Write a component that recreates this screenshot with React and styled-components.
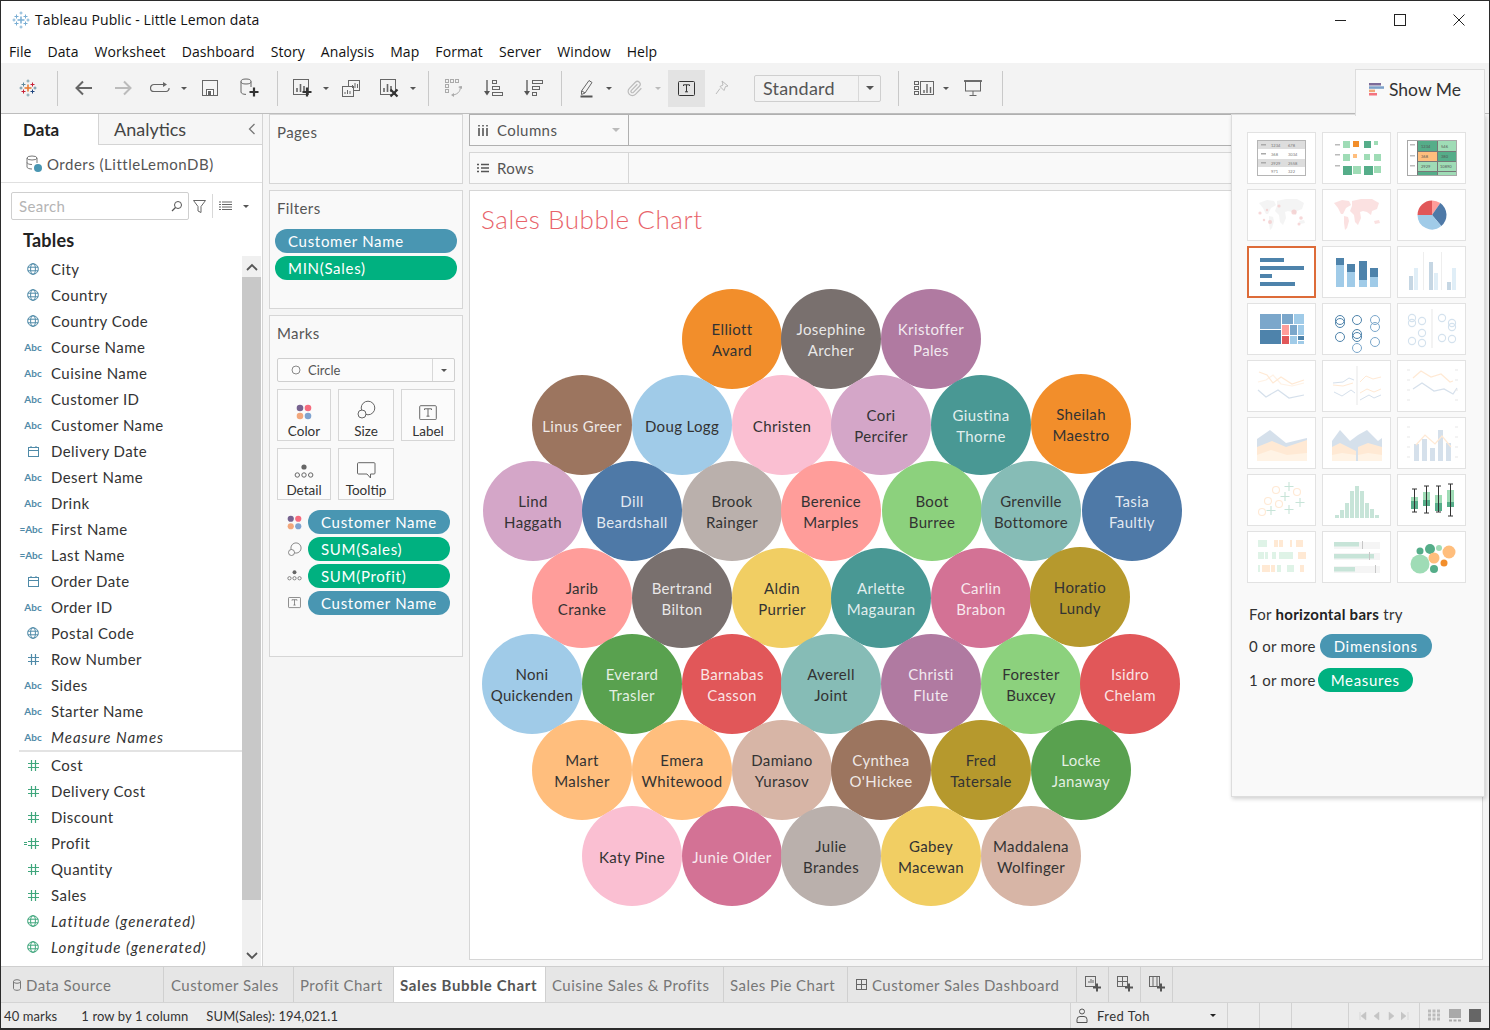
import React from "react";
import styled, { createGlobalStyle } from "styled-components";

const UI = `"Open Sans", "Noto Sans", sans-serif`;
const BOOK = `Lato, "Open Sans", sans-serif`;

const Global = createGlobalStyle`
	html, body { margin: 0; padding: 0; overflow: hidden; background: #fff; }
	* { box-sizing: border-box; }
	svg { display: block; }
`;

const Windowed = styled.div`
	width: 1490px;
	height: 1030px;
	display: flex;
	flex-direction: column;
	border: 1px solid #2b2b2b;
	border-bottom-width: 2px;
	background: #f5f5f5;
	font-family: ${BOOK};
	color: #333;
	overflow: hidden;
	position: relative;
`;

/* title + menu */
const TitleBar = styled.div`
	height: 37px;
	background: #fff;
	display: flex;
	align-items: center;
	padding: 0 1px 0 11px;
	font: 14px ${UI};
	letter-spacing: 0.12px;
	color: #111;
	gap: 5px;
`;
const WinButtons = styled.div`
	margin-left: auto;
	display: flex;
`;
const WinButton = styled.div`
	width: 59px;
	height: 37px;
	display: flex;
	align-items: center;
	justify-content: center;
`;
const MenuBar = styled.div`
	height: 25px;
	background: #fff;
	display: flex;
	align-items: center;
	padding: 2px 0 0 8px;
	gap: 16px;
	font: 14px ${UI};
	letter-spacing: 0.08px;
	color: #111;
`;

/* toolbar */
const ToolBar = styled.div`
	height: 51px;
	background: #f3f3f3;
	border-bottom: 1px solid #bdbdbd;
	display: flex;
	align-items: center;
`;
const ToolSep = styled.div`
	width: 1px;
	height: 35px;
	background: #c9c9c9;
	margin-left: ${(p) => p.$ml}px;
`;
const ToolIcon = styled.div`
	width: ${(p) => p.$w || 24}px;
	height: ${(p) => (p.$active ? 37 : 24)}px;
	margin-left: ${(p) => p.$ml}px;
	display: flex;
	align-items: center;
	justify-content: center;
	background: ${(p) => (p.$active ? "#e3e3e3" : "transparent")};
`;
const Caret = styled.div`
	width: 0;
	height: 0;
	flex: none;
	border-left: ${(p) => p.$s || 3}px solid transparent;
	border-right: ${(p) => p.$s || 3}px solid transparent;
	border-top: ${(p) => p.$s || 3}px solid ${(p) => p.$color || "#555"};
	margin-left: ${(p) => (p.$ml || 0) + 4 - (p.$s || 3)}px;
	margin-right: ${(p) => 4 - (p.$s || 3)}px;
`;
const FitSelect = styled.div`
	width: 127px;
	height: 27px;
	margin-left: ${(p) => p.$ml}px;
	border: 1px solid #cfcfcf;
	border-radius: 2px;
	display: flex;
	align-items: center;
	font-size: 18px;
	letter-spacing: 0.2px;
	color: #555;
	padding-left: 8px;
`;
const FitArrow = styled.div`
	margin-left: auto;
	width: 22px;
	height: 100%;
	border-left: 1px solid #d8d8d8;
	display: flex;
	align-items: center;
	justify-content: center;
`;

/* main layout */
const Main = styled.div`
	flex: 1;
	min-height: 0;
	display: flex;
`;
const DataPane = styled.div`
	width: 262px;
	background: #fff;
	border-right: 1px solid #d4d4d4;
	display: flex;
	flex-direction: column;
`;
const PaneTabs = styled.div`
	display: flex;
	height: 31px;
`;
const PaneTab = styled.div`
	width: ${(p) => p.$w}px;
	display: flex;
	align-items: center;
	font-size: ${(p) => (p.$active ? 17 : 18)}px;
	font-weight: ${(p) => (p.$active ? 700 : 400)};
	color: ${(p) => (p.$active ? "#222" : "#444")};
	padding-left: ${(p) => (p.$active ? 22 : 15)}px;
	background: ${(p) => (p.$active ? "#fff" : "#f6f6f6")};
	border-left: ${(p) => (p.$active ? "0" : "1px solid #d4d4d4")};
	border-bottom: ${(p) => (p.$active ? "0" : "1px solid #d4d4d4")};
	justify-content: space-between;
	padding-right: 6px;
`;
const SourceRow = styled.div`
	height: 38px;
	display: flex;
	align-items: center;
	gap: 4px;
	padding: 0 0 0 24px;
	border-bottom: 1px solid #e0e0e0;
	font-size: 15px;
	letter-spacing: 0.5px;
	color: #555;
`;
const SearchRow = styled.div`
	height: 38px;
	padding: 9px 0 0 10px;
	display: flex;
	align-items: flex-start;
`;
const SearchBox = styled.div`
	width: 178px;
	height: 28px;
	border: 1px solid #cfcfcf;
	border-radius: 2px;
	display: flex;
	align-items: center;
	justify-content: space-between;
	padding: 0 5px 0 7px;
	font-size: 15px;
	letter-spacing: 0.35px;
	color: #b4b4b4;
`;
const SearchTool = styled.div`
	display: flex;
	align-items: center;
	height: 28px;
	gap: 6px;
	margin-left: 4px;
`;
const ThinSep = styled.div`
	width: 1px;
	height: 24px;
	background: #d8d8d8;
`;
const TablesTitle = styled.div`
	height: 35px;
	padding: 8px 0 0 22px;
	font-size: 18px;
	font-weight: 700;
	letter-spacing: 0.2px;
	color: #222;
`;
const FieldArea = styled.div`
	flex: 1;
	min-height: 0;
	display: flex;
`;
const FieldList = styled.div`
	flex: 1;
	min-width: 0;
`;
const FieldRow = styled.div`
	height: 26px;
	display: flex;
	align-items: center;
	font-size: 15px;
	color: #333;
	font-style: ${(p) => (p.$italic ? "italic" : "normal")};
	letter-spacing: ${(p) => (p.$italic ? 1 : 0.45)}px;
`;
const FieldGlyph = styled.div`
	width: 50px;
	padding-left: 19px;
	height: 100%;
	display: flex;
	align-items: center;
	justify-content: center;
	flex: none;
	padding-right: 5px;
	font-style: normal;
	letter-spacing: 0;
`;
const AbcMark = styled.span`
	font-size: 10px;
	font-weight: 700;
	color: #4f8aa8;
	white-space: nowrap;
	margin-left: ${(p) => (p.$eq ? -4 : 0)}px;
`;
const EqShift = styled.div`
	margin-left: -4px;
`;
const FieldDivider = styled.div`
	height: 2px;
	margin-left: 18px;
	background: #e3e3e3;
`;
const ScrollTrack = styled.div`
	width: 19px;
	margin-right: 1px;
	background: #f0f0f0;
	display: flex;
	flex-direction: column;
`;
const ScrollArrow = styled.div`
	height: 21px;
	display: flex;
	align-items: center;
	justify-content: center;
	margin-top: ${(p) => (p.$end ? "auto" : "0")};
`;
const ScrollThumb = styled.div`
	height: 623px;
	background: #c8c8c8;
`;
const MidColumn = styled.div`
	width: 206px;
	padding: 0 6px;
	display: flex;
	flex-direction: column;
	gap: 6px;
	flex: none;
`;
const Card = styled.div`
	height: ${(p) => p.$h}px;
	background: #f9f9f9;
	border: 1px solid #d6d6d6;
	padding: 0 5px;
`;
const CardTitle = styled.div`
	font-size: 15px;
	letter-spacing: 0.4px;
	color: #555;
	padding: 8px 0 0 2px;
	height: 38px;
`;
const Pill = styled.div`
	height: 24px;
	border-radius: 12px;
	background: ${(p) => (p.$measure ? "#00b180" : "#4996b2")};
	color: #fff;
	font-size: 15px;
	letter-spacing: 0.7px;
	display: flex;
	align-items: center;
	padding: 0 ${(p) => p.$pad || 13}px;
	white-space: nowrap;
	width: ${(p) => (p.$w ? `${p.$w}px` : "auto")};
`;
const PillStack = styled.div`
	display: flex;
	flex-direction: column;
	gap: 3px;
`;
const MarkSelect = styled.div`
	margin: 4px 2px 0;
	height: 24px;
	border: 1px solid #cfcfcf;
	border-radius: 2px;
	background: #fbfbfb;
	display: flex;
	align-items: center;
	font-size: 13px;
	color: #555;
	padding-left: 13px;
	gap: 7px;
`;
const MarkArrow = styled.div`
	margin-left: auto;
	width: 22px;
	height: 100%;
	border-left: 1px solid #d8d8d8;
	display: flex;
	align-items: center;
	justify-content: center;
`;
const MarkGrid = styled.div`
	margin: 7px 2px 0;
	display: grid;
	grid-template-columns: 54px 56px 54px;
	grid-auto-rows: 52px;
	column-gap: 7px;
	row-gap: 7px;
`;
const MarkButton = styled.div`
	border: 1px solid #d6d6d6;
	background: #fbfbfb;
	display: flex;
	flex-direction: column;
	align-items: center;
	justify-content: flex-end;
	font-size: 13.5px;
	color: #333;
	padding-bottom: 1px;
	gap: 3px;
`;
const EncodingList = styled.div`
	margin-top: 10px;
	display: flex;
	flex-direction: column;
	gap: 3px;
`;
const EncodingRow = styled.div`
	display: flex;
	align-items: center;
	padding-left: 12px;
	gap: 6px;
`;
const EncodingIcon = styled.div`
	width: 15px;
	display: flex;
	justify-content: center;
`;
const RightColumn = styled.div`
	flex: 1;
	min-width: 0;
	padding-right: 6px;
	display: flex;
	flex-direction: column;
	gap: 6px;
`;
const Shelf = styled.div`
	height: 32px;
	display: flex;
	background: #f9f9f9;
	border-top: 1px solid ${(p) => (p.$dark ? "#b0b0b0" : "#d6d6d6")};
	border-bottom: 1px solid ${(p) => (p.$dark ? "#b0b0b0" : "#d6d6d6")};
	border-left: 1px solid ${(p) => (p.$dark ? "#b0b0b0" : "#d6d6d6")};
`;
const ShelfLabel = styled.div`
	width: 159px;
	border-right: 1px solid ${(p) => (p.$dark ? "#b0b0b0" : "#d6d6d6")};
	display: flex;
	align-items: center;
	gap: 8px;
	padding: 0 8px 0 7px;
	font-size: 15px;
	letter-spacing: 0.4px;
	color: #555;
`;
const ShelfCaret = styled.div`
	margin-left: auto;
`;
const View = styled.div`
	flex: 1;
	min-height: 0;
	margin-bottom: 6px;
	background: #fff;
	border: 1px solid #d6d6d6;
	position: relative;
`;
const SheetTitle = styled.div`
	font-size: 26px;
	font-weight: 300;
	letter-spacing: 0.55px;
	color: #e8636a;
	padding: 12px 0 0 11px;
`;
const Bubble = styled.div`
	position: absolute;
	width: 100px;
	height: 100px;
	border-radius: 50%;
	background: ${(p) => p.$bg};
	color: ${(p) => (p.$light ? "rgba(255,255,255,.85)" : "#333")};
	display: flex;
	align-items: center;
	justify-content: center;
	text-align: center;
	font-size: 15px;
	letter-spacing: 0.35px;
	line-height: 21px;
	padding-top: 2px;
	white-space: pre-line;
`;

/* show me (floats over the view) */
const ShowMeTab = styled.div`
	position: absolute;
	left: 1354px;
	top: 68px;
	width: 130px;
	height: 47px;
	background: #f9f9f9;
	border: 1px solid #ddd;
	border-bottom: 0;
	display: flex;
	align-items: center;
	gap: 5px;
	padding: 0 0 8px 13px;
	font-size: 17.5px;
	color: #333;
	z-index: 2;
`;
const ShowMePanel = styled.div`
	position: absolute;
	left: 1230px;
	top: 113px;
	width: 254px;
	height: 683px;
	background: #f9f9f9;
	border: 1px solid #ddd;
	box-shadow: 1px 2px 4px rgba(0, 0, 0, 0.18);
	padding: 17px 0 0 15px;
	z-index: 1;
`;
const ThumbGrid = styled.div`
	display: grid;
	grid-template-columns: repeat(3, 69px);
	grid-auto-rows: 52px;
	column-gap: 6px;
	row-gap: 5px;
`;
const Thumb = styled.div`
	background: #fff;
	border: ${(p) => (p.$on ? "2px solid #dd6b38" : "1px solid #e2e2e2")};
	overflow: hidden;
	display: flex;
	align-items: center;
	justify-content: center;
	svg {
		opacity: ${(p) => (p.$faded ? 0.32 : 1)};
		flex: none;
	}
`;
const HintText = styled.div`
	margin: 22px 0 10px 2px;
	font-size: 15px;
	letter-spacing: 0.3px;
	color: #333;
	b { font-weight: 700; color: #222; }
`;
const HintRow = styled.div`
	display: flex;
	align-items: center;
	margin: 8px 0 0 2px;
	gap: ${(p) => p.$gap || 3}px;
	font-size: 15px;
	letter-spacing: 0.3px;
	color: #333;
	height: 26px;
`;

/* bottom */
const SheetTabs = styled.div`
	height: 37px;
	background: #e6e6e6;
	border-top: 1px solid #cfcfcf;
	border-bottom: 1px solid #d4d4d4;
	display: flex;
	flex: none;
`;
const SheetTab = styled.div`
	width: ${(p) => p.$w}px;
	background: ${(p) => (p.$active ? "#fff" : "transparent")};
	border-right: 1px solid #d0d0d0;
	font-size: 15px;
	font-weight: ${(p) => (p.$active ? 700 : 400)};
	letter-spacing: ${(p) => (p.$active ? 0.65 : 0.45)}px;
	color: ${(p) => (p.$active ? "#555" : "#777")};
	display: flex;
	align-items: center;
	gap: 4px;
	padding-left: ${(p) => p.$pl || 6}px;
	white-space: nowrap;
`;
const StatusBar = styled.div`
	height: 25px;
	background: #ececec;
	display: flex;
	align-items: center;
	font-size: 13px;
	letter-spacing: 0.1px;
	color: #333;
	flex: none;
`;
const StatusText = styled.div`
	margin-left: ${(p) => p.$ml}px;
	white-space: nowrap;
`;
const StatusRight = styled.div`
	margin-left: auto;
	display: flex;
	height: 100%;
`;
const StatusCell = styled.div`
	width: ${(p) => p.$w}px;
	height: 100%;
	border-left: 1px solid #d2d2d2;
	display: flex;
	align-items: center;
	justify-content: ${(p) => p.$justify || "flex-start"};
	gap: ${(p) => p.$gap || 0}px;
	padding: 0 ${(p) => p.$pad || 0}px;
	letter-spacing: ${(p) => (p.$gap ? 0.5 : 0)}px;
`;

/* ---------- icons ---------- */
const Ico = ({ w = 24, h = 24, children, vb }) => (
	<svg width={w} height={h} viewBox={vb || `0 0 ${w} ${h}`} fill="none">
		{children}
	</svg>
);

const Plus = ({ x, y, s, c, t = 1.4 }) => (
	<path d={`M${x - s} ${y}H${x + s}M${x} ${y - s}V${y + s}`} stroke={c} strokeWidth={t} />
);

const TableauLogo = ({ faded }) => (
	<Ico w={18} h={18}>
		<g opacity={faded ? 0.9 : 1}>
			<Plus x={9} y={9} s={3.5} c={faded ? "#6aa5cf" : "#e8762d"} t={1.5} />
			<Plus x={4.5} y={5.5} s={2} c={faded ? "#6aa5cf" : "#5b879b"} t={1} />
			<Plus x={13.5} y={5.5} s={2} c={faded ? "#6aa5cf" : "#c72035"} t={1} />
			<Plus x={4.5} y={12.5} s={2} c={faded ? "#6aa5cf" : "#c72035"} t={1} />
			<Plus x={13.5} y={12.5} s={2} c={faded ? "#6aa5cf" : "#1f457e"} t={1} />
			<Plus x={9} y={2} s={1.5} c={faded ? "#6aa5cf" : "#7099a6"} t={0.9} />
			<Plus x={9} y={16} s={1.5} c={faded ? "#6aa5cf" : "#7099a6"} t={0.9} />
			<Plus x={2} y={9} s={1.5} c={faded ? "#6aa5cf" : "#59879b"} t={0.9} />
			<Plus x={16} y={9} s={1.5} c={faded ? "#6aa5cf" : "#59879b"} t={0.9} />
		</g>
	</Ico>
);

const Arrow = ({ dir, c }) => (
	<Ico w={18} h={16}>
		{dir === "l" ? (
			<path d="M1.5 8H17M8 1.5L1.5 8L8 14.5" stroke={c} strokeWidth="2" />
		) : (
			<path d="M1 8H16.5M10 1.5L16.5 8L10 14.5" stroke={c} strokeWidth="2" />
		)}
	</Ico>
);

const BarsBox = ({ x = 1, y = 1, s = 15, c = "#666" }) => (
	<g stroke={c}>
		<rect x={x + 0.5} y={y + 0.5} width={s} height={s} />
		<path d={`M${x + 4} ${y + s - 2}v-4M${x + 7.5} ${y + s - 2}v-8M${x + 11} ${y + s - 2}v-6`} strokeWidth="1.6" />
	</g>
);

const ToolGlyphs = {
	redo: (
		<Ico w={20} h={12}>
			<path d="M15 2.5H4a3 3 0 0 0 0 7h12a3 3 0 0 0 3-3.5" stroke="#666" strokeWidth="1.2" />
			<path d="M13 0l4 2.5l-4 2.5z" fill="#666" />
		</Ico>
	),
	save: (
		<Ico w={17} h={17}>
			<rect x=".5" y=".5" width="15" height="15" stroke="#666" />
			<rect x="4.5" y="9.5" width="7" height="6" fill="#fff" stroke="#666" />
			<rect x="6" y="11" width="3" height="4.5" fill="#666" />
		</Ico>
	),
	newData: (
		<Ico w={20} h={20}>
			<ellipse cx="7" cy="3.5" rx="5" ry="2.5" stroke="#666" />
			<path d="M2 3.5V14c0 1.4 2 2.4 5 2.4M12 3.5V9" stroke="#666" />
			<path d="M15 9.5v9M10.5 14h9" stroke="#333" strokeWidth="2.2" />
		</Ico>
	),
	newSheet: (
		<Ico w={20} h={20}>
			<BarsBox />
			<path d="M15 9.5v9M10.5 14h9" stroke="#333" strokeWidth="2.2" />
		</Ico>
	),
	dupSheet: (
		<Ico w={18} h={17}>
			<rect x="6.5" y=".5" width="11" height="10" stroke="#666" fill="#f3f3f3" />
			<rect x=".5" y="6.5" width="11" height="10" stroke="#666" fill="#f3f3f3" />
			<path d="M3 14v-2M5.5 14v-4M8 14v-3M10.5 8V5M13 8V3M15.5 8V4" stroke="#666" />
		</Ico>
	),
	clearSheet: (
		<Ico w={20} h={20}>
			<BarsBox />
			<path d="M11.5 11.5l7 7M18.5 11.5l-7 7" stroke="#333" strokeWidth="2.2" />
		</Ico>
	),
	swap: (
		<Ico w={20} h={20}>
			<g stroke="#aaa">
				<rect x="1.5" y="1.5" width="3" height="3" />
				<rect x="6.5" y="1.5" width="3" height="3" />
				<rect x="11.5" y="1.5" width="3" height="3" />
				<rect x="1.5" y="6.5" width="3" height="3" />
				<rect x="1.5" y="11.5" width="3" height="3" />
			</g>
			<path d="M16 8c1 4-1 8-7 9" stroke="#aaa" />
			<path d="M10 15v4l-3-2zM14 9l4-1l0 3z" fill="#aaa" />
		</Ico>
	),
	sortAsc: (
		<Ico w={20} h={18}>
			<path d="M4 1v14" stroke="#555" strokeWidth="1.3" />
			<path d="M1 12h6l-3 4.5z" fill="#555" />
			<g stroke="#666">
				<rect x="9.5" y="1.5" width="4" height="3" />
				<rect x="9.5" y="7.5" width="7" height="3" />
				<rect x="9.5" y="13.5" width="10" height="3" />
			</g>
		</Ico>
	),
	sortDesc: (
		<Ico w={20} h={18}>
			<path d="M4 1v14" stroke="#555" strokeWidth="1.3" />
			<path d="M1 12h6l-3 4.5z" fill="#555" />
			<g stroke="#666">
				<rect x="9.5" y="1.5" width="10" height="3" />
				<rect x="9.5" y="7.5" width="7" height="3" />
				<rect x="9.5" y="13.5" width="4" height="3" />
			</g>
		</Ico>
	),
	highlight: (
		<Ico w={14} h={19}>
			<path d="M1.5 12L9 1.5l3 2L5 14l-3.5 1.5z" stroke="#666" />
			<path d="M2 12l3 2" stroke="#666" />
			<path d="M.5 17.5h12" stroke="#555" strokeWidth="2" />
		</Ico>
	),
	clip: (
		<Ico w={17} h={17} vb="0 0 24 24">
			<path
				d="m16 6-8.414 8.586a2 2 0 0 0 2.829 2.829l8.414-8.586a4 4 0 1 0-5.657-5.657l-8.379 8.551a6 6 0 1 0 8.485 8.485l8.379-8.551"
				stroke="#bbb"
				strokeWidth="1.7"
			/>
		</Ico>
	),
	tbox: (
		<Ico w={18} h={15}>
			<rect x=".5" y=".5" width="16" height="14" rx="1" stroke="#333" />
			<path d="M5.5 5V3.8h6V5M8.5 3.8v7M7 10.8h3" stroke="#333" />
		</Ico>
	),
	pin: (
		<Ico w={14} h={16}>
			<path d="M7 1l6 5l-2.5 .5L9 10.5l-4-4l3-1.5zM5 8.5L1 14" stroke="#bbb" />
		</Ico>
	),
	cards: (
		<Ico w={20} h={15}>
			<g stroke="#666">
				<rect x=".5" y=".5" width="4" height="3" />
				<rect x=".5" y="5.5" width="4" height="3" />
				<rect x=".5" y="10.5" width="4" height="3" />
				<rect x="6.5" y=".5" width="13" height="13" />
			</g>
			<path d="M10 12V9M13 12V3M16.5 12V6" stroke="#666" strokeWidth="1.4" />
		</Ico>
	),
	present: (
		<Ico w={18} h={16}>
			<path d="M0 1h18" stroke="#555" strokeWidth="1.6" />
			<rect x="1.5" y="1" width="15" height="10" stroke="#666" />
			<path d="M9 11v4M5.5 15.5h7" stroke="#666" />
		</Ico>
	),
};

const GlobeIcon = ({ c }) => (
	<Ico w={12} h={12}>
		<g stroke={c}>
			<circle cx="6" cy="6" r="5.3" />
			<ellipse cx="6" cy="6" rx="2.4" ry="5.3" />
			<path d="M.8 4.2h10.4M.8 7.8h10.4" />
		</g>
	</Ico>
);

const CalendarIcon = () => (
	<Ico w={11} h={11}>
		<rect x=".5" y="1.5" width="10" height="9" stroke="#4f8aa8" />
		<path d="M.5 4.5h10" stroke="#4f8aa8" />
		<path d="M3 0v2M8 0v2" stroke="#4f8aa8" />
	</Ico>
);

const HashIcon = ({ c }) => (
	<Ico w={11} h={11}>
		<path d="M3.500 0v11M7.500 0v11M0 3.500h11M0 7.500h11" stroke={c} strokeWidth="1.2" />
	</Ico>
);
const EqHashIcon = ({ c }) => (
	<Ico w={15} h={11}>
		<path d="M0 4.500h3M0 6.500h3" stroke={c} />
		<path d="M7.500 0v11M11.500 0v11M4 3.500h11M4 7.500h11" stroke={c} strokeWidth="1.2" />
	</Ico>
);

const Swatches = ({ s = 16 }) => (
	<Ico w={s} h={s} vb="0 0 16 16">
		<circle cx="4" cy="4" r="3.3" fill="#76628f" />
		<circle cx="12" cy="4" r="3.3" fill="#f56b7e" />
		<circle cx="4" cy="12" r="3.3" fill="#f2a77c" />
		<circle cx="12" cy="12" r="3.3" fill="#7fa3cf" />
	</Ico>
);
const SizeIcon = ({ s = 20 }) => (
	<Ico w={s} h={s} vb="0 0 20 20">
		<circle cx="12" cy="8" r="6.8" stroke="#666" fill="#fbfbfb" />
		<circle cx="6" cy="14" r="4" stroke="#666" fill="#fbfbfb" />
	</Ico>
);
const DetailIcon = ({ s = 20 }) => (
	<Ico w={s} h={s * 0.75} vb="0 0 20 15">
		<circle cx="10" cy="3" r="2.6" fill="#666" />
		<g stroke="#666">
			<circle cx="3.3" cy="11" r="2.2" />
			<circle cx="10" cy="11" r="2.2" />
			<circle cx="16.7" cy="11" r="2.2" />
		</g>
	</Ico>
);
const LabelIcon = ({ s = 18 }) => (
	<Ico w={s} h={s * 0.86} vb="0 0 18 15.5">
		<rect x=".7" y=".7" width="16.6" height="14" rx="1" stroke="#666" />
		<path d="M5.5 5V3.8h7V5M9 3.8v7.4M7.5 11.2h3" stroke="#666" />
	</Ico>
);
const TooltipIcon = () => (
	<Ico w={19} h={17}>
		<path d="M1.5.7h15.5a1 1 0 0 1 1 1V11a1 1 0 0 1-1 1H13.5v4L10 12H1.5a1 1 0 0 1-1-1V1.7a1 1 0 0 1 1-1z" stroke="#666" />
	</Ico>
);
const Chevron = ({ up }) => (
	<Ico w={12} h={8}>
		<path d={up ? "M1 7L6 2l5 5" : "M1 1l5 5l5-5"} stroke="#555" strokeWidth="1.8" />
	</Ico>
);

/* ---------- show me thumbnails ---------- */
const rects = (list) =>
	list.map(([x, y, w, h, c], i) => <rect key={i} x={x} y={y} width={w} height={h} fill={c} />);
const rings = (list, r) => list.map(([x, y], i) => <circle key={i} cx={x} cy={y} r={r} />);
const T = ({ children }) => (
	<svg width="67" height="50" viewBox="1 1 67 50" fill="none">
		{children}
	</svg>
);

const DK = "#4e83ab";
const MID = "#7ba7cb";
const LT = "#a0cbe8";
const GD = "#55ad89";
const GL = "#9fdcb6";
const OR = "#f28e2b";
const OL = "#ffbe7d";

const land = "M12 14l8-3 7 1 2 4-5 3-3 6-2 0-3-6zM30 12l9-2 11 0 7 4-2 6-5 2-1 4-4-3-4-1-3 1 1 6-3 7-3-3-1-7-4-4 2-5zM52 32l5-1 1 3-5 1z M22 27l4 1 1 4-2 7-2 2-1-7z";

const thumbs = [
	<T>
		<rect x="10.5" y="8.5" width="48" height="35" fill="#fff" stroke="#b5b5b5" />
		{rects([[11, 9, 47, 8, "#ddd"], [11, 27, 47, 8, "#ddd"], [14, 12, 5, 1.5, "#aaa"], [14, 21, 5, 1.5, "#aaa"], [14, 30, 5, 1.5, "#aaa"]])}
		<g fontSize="4" fill="#777" fontFamily="Lato, sans-serif">
			<text x="24" y="15">1234</text><text x="41" y="15">678</text>
			<text x="24" y="24">368</text><text x="41" y="24">3034</text>
			<text x="24" y="33">2929</text><text x="41" y="33">2558</text>
			<text x="24" y="41">971</text><text x="41" y="41">322</text>
		</g>
	</T>,
	<T>
		{rects([[13, 12, 5, 1.5, "#bbb"], [13, 22, 5, 1.5, "#bbb"], [13, 33, 5, 1.5, "#bbb"],
			[21, 9, 7, 7, GL], [31, 9, 6, 6, OR], [42, 9, 7, 7, GD], [52, 9, 4, 4, GL],
			[21, 22, 7, 7, GL], [31, 22, 4, 4, OL], [42, 22, 6, 6, GL], [52, 22, 7, 7, GL],
			[21, 34, 9, 9, GD], [31, 34, 8, 8, GL], [42, 34, 9, 9, GD], [52, 34, 7, 7, GL]])}
	</T>,
	<T>
		<rect x="10.5" y="8.5" width="49" height="35" fill="#fff" stroke="#a8a8a8" />
		{rects([[21, 9, 19, 10, GD], [41, 9, 18, 10, GL], [21, 20, 19, 9, OL], [41, 20, 18, 9, GD], [21, 30, 19, 9, GL], [41, 30, 18, 9, GL], [21, 40, 19, 3, GD], [41, 40, 18, 3, GL],
			[13, 12, 5, 1.5, "#bbb"], [13, 23, 5, 1.5, "#bbb"], [13, 33, 5, 1.5, "#bbb"], [20, 9, 1, 34, "#777"], [40, 9, 1, 34, "#777"], [21, 19, 38, 1, "#777"], [21, 29, 38, 1, "#777"], [21, 39, 38, 1, "#777"]])}
		<g fontSize="4" fill="#555" fontFamily="Lato, sans-serif">
			<text x="24" y="15.5">1234</text><text x="44" y="15.5">546</text>
			<text x="24" y="26">368</text><text x="44" y="26">380</text>
			<text x="24" y="36">2929</text><text x="43" y="36">10890</text>
		</g>
	</T>,
	<T>
		<path d={land} fill="#c8c8c8" opacity=".6" />
		<g fill="#e15759" opacity=".7">
			<circle cx="13" cy="24" r="1.6" /><circle cx="20" cy="21" r="1.2" /><circle cx="32" cy="17" r="1.6" /><circle cx="47" cy="23" r="2.6" /><circle cx="17" cy="31" r="1.2" /><circle cx="54" cy="29" r="1.8" /><circle cx="23" cy="33" r="2" /><circle cx="52" cy="35" r="1.5" />
		</g>
	</T>,
	<T><path d={land} fill="#f4a5a5" /></T>,
	<T>
		<path d="M35 26V11.5A14.5 14.5 0 0 1 43.3 14.1z" fill="#ff9d9a" />
		<path d="M35 26L20.5 26A14.5 14.5 0 0 1 35 11.5z" fill="#e15759" />
		<path d="M35 26L43.3 14.1A14.5 14.5 0 0 1 44.3 37.1z" fill="#4e79a7" />
		<path d="M35 26L44.3 37.1A14.5 14.5 0 0 1 20.5 26z" fill={LT} />
	</T>,
	<T>{rects([[13, 12, 24, 4, DK], [13, 20, 44, 4, DK], [13, 28, 12, 4, DK], [13, 36, 35, 4, DK]])}</T>,
	<T>
		{rects([[14, 12, 8, 7, DK], [14, 19, 8, 22, LT], [25, 18, 8, 8, DK], [25, 26, 8, 15, LT], [37, 15, 8, 19, DK], [37, 34, 8, 7, LT], [48, 22, 8, 9, DK], [48, 31, 8, 10, LT]])}
	</T>,
	<T>
		{rects([[12, 30, 4, 14, DK], [17, 22, 4, 22, LT], [32, 16, 4, 28, DK], [37, 27, 4, 17, LT], [50, 36, 4, 8, DK], [55, 22, 4, 22, LT], [26, 6, 1, 38, "#ccc"], [44, 6, 1, 38, "#ccc"]])}
	</T>,
	<T>
		{rects([[13, 11, 21, 15, MID], [13, 27, 21, 14, DK], [35, 11, 11, 10, MID], [47, 11, 10, 10, LT], [35, 22, 7, 10, "#ff9d9a"], [43, 22, 7, 10, MID], [51, 22, 6, 10, LT], [35, 33, 7, 8, "#e15759"], [43, 33, 7, 8, LT], [51, 33, 6, 4, DK], [51, 38, 6, 3, LT]])}
	</T>,
	<T>
		<g strokeWidth="1" stroke={DK}>
			{rings([[18, 17], [18, 20], [18, 34], [35, 17], [35, 31], [35, 34]], 4.5)}
		</g>
		<g strokeWidth="1" stroke={MID}>
			{rings([[53, 17], [53, 24], [53, 39], [35, 45]], 4.5)}
		</g>
	</T>,
	<T>
		<g strokeWidth="1.1" stroke={MID}>
			{rings([[15, 15], [15, 20], [25, 18], [25, 30], [15, 38], [25, 40], [45, 15], [55, 20], [55, 24], [45, 35], [55, 36]], 3.6)}
		</g>
		<path d="M35 6v39" stroke="#bbb" />
	</T>,
	<T>
		<path d="M12 12l8 3 6 8 8-6 11 7 12-4" stroke={OL} strokeWidth="1.2" />
		<path d="M11 22l8-2 7-5 8 9 11 2 12-3" stroke={OL} strokeWidth="1.2" opacity=".6" />
		<path d="M11 30l8 7 12-7 11 8 15-3" stroke="#7fa0c4" strokeWidth="1.2" />
	</T>,
	<T>
		<path d="M11 23l10-1 6-4 5 2M12 32l8 4 9-6 4 3" stroke="#7fa0c4" strokeWidth="1" />
		<path d="M11 25l10 1 10-3M38 22l6-6 7 3 8-2M38 33l7-4 7 3 7-3" stroke={OL} strokeWidth="1" />
		<path d="M38 40l9-5 5 3 7-3" stroke="#7fa0c4" strokeWidth="1" />
		<path d="M35 6v39" stroke="#bbb" />
	</T>,
	<T>
		<path d="M16 18l8-7 10 6 10-3 9 8 3-1" stroke={OL} strokeWidth="1.2" />
		<path d="M16 29l9-6 12 8 10-2 9 5 4-6" stroke="#7fa0c4" strokeWidth="1.2" />
		<path d="M10 10h3M10 20h3M10 30h3M10 40h3M58 10h3M58 20h3M58 30h3M58 40h3" stroke="#bbb" />
	</T>,
	<T>
		<path d="M10 22L23 13L39 26L60 21V44H10z" fill="#7fa0c4" />
		<path d="M10 30L25 24L39 30L60 23V44H10z" fill="#ffbe7d" />
		<path d="M10 38L24 33L40 38L60 36V44H10z" fill="#ffdcb0" />
	</T>,
	<T>
		<path d="M10 24L18 13L28 24L36 18L45 13L56 24L60 21V44H10z" fill="#7fa0c4" />
		<path d="M10 30L18 26L34 34V44H10zM36 30L46 26L60 30V44H36z" fill="#ffbe7d" />
		<path d="M10 38L20 36L34 38V44H10zM36 38L46 36L60 38V44H36z" fill="#ffdcb0" />
	</T>,
	<T>
		{rects([[17, 27, 5, 17, "#7fa0c4"], [25, 22, 5, 22, "#7fa0c4"], [33, 31, 5, 13, "#7fa0c4"], [41, 13, 5, 31, "#7fa0c4"], [49, 26, 5, 18, "#7fa0c4"]])}
		<path d="M19 28l9-10 10 9 7-8 9 11" stroke={OL} strokeWidth="1.2" />
		<path d="M10 10h3M10 20h3M10 30h3M10 40h3M58 10h3M58 20h3M58 30h3M58 40h3" stroke="#bbb" />
	</T>,
	<T>
		<g stroke={OL} strokeWidth="1.1">
			{rings([[29, 16], [50, 18], [21, 27], [32, 30], [15, 38]], 3.5)}
		</g>
		<g stroke={GD} strokeWidth="1.1">
			<path d="M42 8v9M37.5 12.5h9M38 18v9M33.5 22.5h9M53 24v9M48.5 28.5h9M24 32v9M19.5 36.5h9M42 31v9M37.5 35.5h9" />
		</g>
	</T>,
	<T>
		{rects([[13, 41, 4, 3, GD], [18, 36, 4, 8, GD], [23, 29, 4, 15, GD], [28, 17, 4, 27, GD], [33, 12, 4, 32, GD], [38, 17, 4, 27, GD], [43, 29, 4, 15, GD], [48, 35, 4, 9, GD], [53, 41, 4, 3, GD]])}
	</T>,
	<T>
		{rects([[14, 23, 7, 11, GL], [14, 27, 7, 8, GD], [26, 18, 7, 11, GL], [26, 26, 7, 6, GD], [38, 21, 7, 8, GL], [38, 29, 7, 8, GD], [50, 16, 7, 12, GL], [50, 28, 7, 5, GD]])}
		<path d="M17.5 15v23M15 15h5M15 38h5M29.500 12v27M27 12h5M27 39h5M41.500 12v26M39 12h5M39 38h5M53.500 10v32M51 10h5M51 42h5" stroke="#333" strokeWidth="1" />
	</T>,
	<T>
		{rects([[11, 9, 9, 7, GL], [27, 9, 4, 7, OL], [32, 9, 4, 7, OL], [43, 9, 2, 7, OL], [49, 9, 7, 7, OL],
			[11, 21, 6, 7, GL], [18, 21, 3, 7, GL], [25, 21, 4, 7, GL], [32, 21, 14, 7, GL], [51, 21, 8, 7, OL],
			[11, 34, 2, 7, GL], [15, 34, 8, 7, OL], [24, 34, 4, 7, OL], [30, 34, 4, 7, GL], [40, 34, 7, 7, GL], [53, 34, 4, 7, OL]])}
	</T>,
	<T>
		{rects([[12, 11, 46, 7, "#e3e3e3"], [12, 11, 25, 4.500, GD], [12, 22, 46, 7, "#e3e3e3"], [12, 23, 40, 4.500, GD], [12, 35, 46, 7, "#e3e3e3"], [12, 36, 21, 4.500, GD], [40, 10, 1, 8, "#555"], [47, 21, 1, 8, "#555"], [53, 34, 1, 8, "#555"]])}
	</T>,
	<T>
		<circle cx="23" cy="33" r="9.500" fill={GL} />
		<circle cx="23" cy="20" r="3.500" fill={GD} />
		<circle cx="33" cy="18" r="5" fill={GD} />
		<circle cx="42" cy="17" r="3" fill={GL} />
		<circle cx="37" cy="27" r="5.500" fill={OL} />
		<circle cx="52" cy="21" r="6.500" fill={OL} />
		<circle cx="47" cy="32" r="3.500" fill={OR} />
		<circle cx="37" cy="38" r="4" fill={GD} />
	</T>,
];
const fadedThumbs = [3, 4, 8, 11, 12, 13, 14, 15, 16, 17, 18, 19, 21, 22];

/* ---------- data ---------- */
const fieldsTop = [
	["City", "globe"], ["Country", "globe"], ["Country Code", "globe"], ["Course Name", "abc"], ["Cuisine Name", "abc"],
	["Customer ID", "abc"], ["Customer Name", "abc"], ["Delivery Date", "cal"], ["Desert Name", "abc"], ["Drink", "abc"],
	["First Name", "eqabc"], ["Last Name", "eqabc"], ["Order Date", "cal"], ["Order ID", "abc"], ["Postal Code", "globe"],
	["Row Number", "hashDim"], ["Sides", "abc"], ["Starter Name", "abc"], ["Measure Names", "abc", true],
];
const fieldsBottom = [
	["Cost", "hash"], ["Delivery Cost", "hash"], ["Discount", "hash"], ["Profit", "eqhash"], ["Quantity", "hash"], ["Sales", "hash"],
	["Latitude (generated)", "globeG", true], ["Longitude (generated)", "globeG", true],
];

const C = {
	orange: "#f28e2b", grey: "#79706e", purple: "#b07aa1", brown: "#9c755f", sky: "#a0cbe8", pink: "#fabfd2", mauve: "#d4a6c8",
	teal: "#499894", blue: "#4e79a7", taupe: "#bab0ac", salmon: "#ff9d9a", green: "#8cd17d", sea: "#86bcb6", yellow: "#f1ce63",
	rose: "#d37295", olive: "#b6992d", dgreen: "#59a14f", red: "#e15759", peach: "#ffbe7d", tan: "#d7b5a6",
};
// name, centre x, centre y (page coords), fill, light text
const bubbles = [
	["Elliott\nAvard", 732, 339, C.orange], ["Josephine\nArcher", 831, 339, C.grey, 1], ["Kristoffer\nPales", 931, 339, C.purple, 1],
	["Linus Greer", 582, 425, C.brown, 1], ["Doug Logg", 682, 425, C.sky], ["Christen", 782, 425, C.pink], ["Cori\nPercifer", 881, 425, C.mauve], ["Giustina\nThorne", 981, 425, C.teal, 1], ["Sheilah\nMaestro", 1081, 424, C.orange],
	["Lind\nHaggath", 533, 511, C.mauve], ["Dill\nBeardshall", 632, 511, C.blue, 1], ["Brook\nRainger", 732, 511, C.taupe], ["Berenice\nMarples", 831, 511, C.salmon], ["Boot\nBurree", 932, 511, C.green], ["Grenville\nBottomore", 1031, 511, C.sea], ["Tasia\nFaultly", 1132, 511, C.blue, 1],
	["Jarib\nCranke", 582, 598, C.salmon], ["Bertrand\nBilton", 682, 598, C.grey, 1], ["Aldin\nPurrier", 782, 598, C.yellow], ["Arlette\nMagauran", 881, 598, C.teal, 1], ["Carlin\nBrabon", 981, 598, C.rose, 1], ["Horatio\nLundy", 1080, 597, C.olive],
	["Noni\nQuickenden", 532, 684, C.sky], ["Everard\nTrasler", 632, 684, C.dgreen, 1], ["Barnabas\nCasson", 732, 684, C.red, 1], ["Averell\nJoint", 831, 684, C.sea], ["Christi\nFlute", 931, 684, C.purple, 1], ["Forester\nBuxcey", 1031, 684, C.green], ["Isidro\nChelam", 1130, 684, C.red, 1],
	["Mart\nMalsher", 582, 770, C.peach], ["Emera\nWhitewood", 682, 770, C.peach], ["Damiano\nYurasov", 782, 770, C.tan], ["Cynthea\nO'Hickee", 881, 770, C.brown, 1], ["Fred\nTatersale", 981, 770, C.olive], ["Locke\nJanaway", 1081, 770, C.dgreen, 1],
	["Katy Pine", 632, 856, C.pink], ["Junie Older", 732, 856, C.rose, 1], ["Julie\nBrandes", 831, 856, C.taupe], ["Gabey\nMacewan", 931, 856, C.yellow], ["Maddalena\nWolfinger", 1031, 856, C.tan],
];
const VIEW_X = 470;
const VIEW_Y = 191;

const fieldGlyph = (kind) => {
	switch (kind) {
		case "globe": return <GlobeIcon c="#4f8aa8" />;
		case "globeG": return <GlobeIcon c="#3fa67c" />;
		case "abc": return <AbcMark>Abc</AbcMark>;
		case "eqabc": return <AbcMark $eq>=Abc</AbcMark>;
		case "cal": return <CalendarIcon />;
		case "hash": return <HashIcon c="#3fa67c" />;
		case "hashDim": return <HashIcon c="#4f8aa8" />;
		case "eqhash": return <EqShift><EqHashIcon c="#3fa67c" /></EqShift>;
		default: return null;
	}
};

const Field = ({ name, kind, italic }) => (
	<FieldRow $italic={italic}>
		<FieldGlyph>{fieldGlyph(kind)}</FieldGlyph>
		{name}
	</FieldRow>
);

export default function App() {
	return (
		<Windowed>
			<Global />
			<TitleBar>
				<TableauLogo faded />
				Tableau Public - Little Lemon data
				<WinButtons>
					<WinButton>
						<Ico w={12} h={12}><path d="M0 6.500h11" stroke="#222" /></Ico>
					</WinButton>
					<WinButton>
						<Ico w={12} h={12}><rect x=".5" y=".5" width="11" height="11" stroke="#222" /></Ico>
					</WinButton>
					<WinButton>
						<Ico w={12} h={12}><path d="M.5 .5l11 11M11.500 .5l-11 11" stroke="#222" /></Ico>
					</WinButton>
				</WinButtons>
			</TitleBar>
			<MenuBar>
				{["File", "Data", "Worksheet", "Dashboard", "Story", "Analysis", "Map", "Format", "Server", "Window", "Help"].map((m) => (
					<span key={m}>{m}</span>
				))}
			</MenuBar>
			<ToolBar>
				<ToolIcon $ml={15}><TableauLogo /></ToolIcon>
				<ToolSep $ml={17} />
				<ToolIcon $ml={14}><Arrow dir="l" c="#666" /></ToolIcon>
				<ToolIcon $ml={15}><Arrow dir="r" c="#bbb" /></ToolIcon>
				<ToolIcon $ml={11} $w={28}>{ToolGlyphs.redo}</ToolIcon>
				<Caret $ml={6} />
				<ToolIcon $ml={12} $w={20}>{ToolGlyphs.save}</ToolIcon>
				<ToolIcon $ml={17}>{ToolGlyphs.newData}</ToolIcon>
				<ToolSep $ml={16} />
				<ToolIcon $ml={12}>{ToolGlyphs.newSheet}</ToolIcon>
				<Caret $ml={8} />
				<ToolIcon $ml={9}>{ToolGlyphs.dupSheet}</ToolIcon>
				<ToolIcon $ml={14}>{ToolGlyphs.clearSheet}</ToolIcon>
				<Caret $ml={8} />
				<ToolSep $ml={11} />
				<ToolIcon $ml={13}>{ToolGlyphs.swap}</ToolIcon>
				<ToolIcon $ml={15}>{ToolGlyphs.sortAsc}</ToolIcon>
				<ToolIcon $ml={16}>{ToolGlyphs.sortDesc}</ToolIcon>
				<ToolSep $ml={16} />
				<ToolIcon $ml={13}>{ToolGlyphs.highlight}</ToolIcon>
				<Caret $ml={6} />
				<ToolIcon $ml={9}>{ToolGlyphs.clip}</ToolIcon>
				<Caret $ml={8} $color="#bbb" />
				<ToolIcon $ml={6} $w={37} $active>{ToolGlyphs.tbox}</ToolIcon>
				<ToolIcon $ml={5}>{ToolGlyphs.pin}</ToolIcon>
				<FitSelect $ml={20}>
					Standard
					<FitArrow><Caret $s={4} /></FitArrow>
				</FitSelect>
				<ToolSep $ml={17} />
				<ToolIcon $ml={13}>{ToolGlyphs.cards}</ToolIcon>
				<Caret $ml={6} />
				<ToolIcon $ml={11}>{ToolGlyphs.present}</ToolIcon>
				<ToolSep $ml={17} />
			</ToolBar>

			<Main>
				<DataPane>
					<PaneTabs>
						<PaneTab $active $w={97}>Data</PaneTab>
						<PaneTab $w={164}>
							Analytics
							<Ico w={8} h={12}><path d="M6.500 1L1.500 6l5 5" stroke="#777" strokeWidth="1.300" /></Ico>
						</PaneTab>
					</PaneTabs>
					<SourceRow>
						<Ico w={18} h={18}>
							<ellipse cx="7" cy="3" rx="5" ry="2" stroke="#777" />
							<path d="M2 3v9c0 1 2 2 5 2M12 3v5M2 7.500c0 1 2 2 5 2" stroke="#777" />
							<circle cx="13" cy="13" r="4" fill="#4996b2" />
						</Ico>
						Orders (LittleLemonDB)
					</SourceRow>
					<SearchRow>
						<SearchBox>
							Search
							<Ico w={12} h={12}><circle cx="7" cy="5" r="3.500" stroke="#555" /><path d="M4.500 7.500L1 11" stroke="#555" strokeWidth="1.300" /></Ico>
						</SearchBox>
						<SearchTool>
							<Ico w={13} h={13}><path d="M.5 .5h12L8 6.500V12.500L5 11V6.500z" stroke="#666" /></Ico>
							<ThinSep />
							<Ico w={13} h={10}><path d="M0 1h2M3 1h10M0 3.500h2M3 3.500h10M0 6h2M3 6h10M0 8.500h2M3 8.500h10" stroke="#666" /></Ico>
							<Caret $ml={4} />
						</SearchTool>
					</SearchRow>
					<TablesTitle>Tables</TablesTitle>
					<FieldArea>
						<FieldList>
							{fieldsTop.map(([n, k, i]) => (
								<Field key={n} name={n} kind={k} italic={i} />
							))}
							<FieldDivider />
							{fieldsBottom.map(([n, k, i]) => (
								<Field key={n} name={n} kind={k} italic={i} />
							))}
						</FieldList>
						<ScrollTrack>
							<ScrollArrow><Chevron up /></ScrollArrow>
							<ScrollThumb />
							<ScrollArrow $end><Chevron /></ScrollArrow>
						</ScrollTrack>
					</FieldArea>
				</DataPane>

				<MidColumn>
					<Card $h={70}>
						<CardTitle>Pages</CardTitle>
					</Card>
					<Card $h={119}>
						<CardTitle>Filters</CardTitle>
						<PillStack>
							<Pill>Customer Name</Pill>
							<Pill $measure>MIN(Sales)</Pill>
						</PillStack>
					</Card>
					<Card $h={342}>
						<CardTitle>Marks</CardTitle>
						<MarkSelect>
							<Ico w={10} h={10}><circle cx="5" cy="5" r="4" stroke="#888" /></Ico>
							Circle
							<MarkArrow><Caret /></MarkArrow>
						</MarkSelect>
						<MarkGrid>
							<MarkButton><Swatches />Color</MarkButton>
							<MarkButton><SizeIcon />Size</MarkButton>
							<MarkButton><LabelIcon />Label</MarkButton>
							<MarkButton><DetailIcon />Detail</MarkButton>
							<MarkButton><TooltipIcon />Tooltip</MarkButton>
						</MarkGrid>
						<EncodingList>
							<EncodingRow>
								<EncodingIcon><Swatches s={15} /></EncodingIcon>
								<Pill $w={142}>Customer Name</Pill>
							</EncodingRow>
							<EncodingRow>
								<EncodingIcon><SizeIcon s={15} /></EncodingIcon>
								<Pill $measure $w={142}>SUM(Sales)</Pill>
							</EncodingRow>
							<EncodingRow>
								<EncodingIcon><DetailIcon s={15} /></EncodingIcon>
								<Pill $measure $w={142}>SUM(Profit)</Pill>
							</EncodingRow>
							<EncodingRow>
								<EncodingIcon><LabelIcon s={13} /></EncodingIcon>
								<Pill $w={142}>Customer Name</Pill>
							</EncodingRow>
						</EncodingList>
					</Card>
				</MidColumn>

				<RightColumn>
					<Shelf $dark>
						<ShelfLabel $dark>
							<Ico w={12} h={11}><path d="M2 3v8M6 3v8M10 3v8M2 0v1.500M6 0v1.500M10 0v1.500" stroke="#555" strokeWidth="1.600" /></Ico>
							Columns
							<ShelfCaret><Caret $s={4} $color="#bbb" /></ShelfCaret>
						</ShelfLabel>
					</Shelf>
					<Shelf>
						<ShelfLabel>
							<Ico w={12} h={10}><path d="M0 1.500h2M4 1.500h8M0 5h2M4 5h8M0 8.500h2M4 8.500h8" stroke="#555" strokeWidth="1.500" /></Ico>
							Rows
						</ShelfLabel>
					</Shelf>
					<View>
						<SheetTitle>Sales Bubble Chart</SheetTitle>
						{bubbles.map(([name, x, y, bg, light]) => (
							<Bubble key={name} $bg={bg} $light={light} style={{ left: x - VIEW_X - 50, top: y - VIEW_Y - 50 }}>
								{name}
							</Bubble>
						))}
					</View>
				</RightColumn>
			</Main>

			<ShowMeTab>
				<Ico w={15} h={13}>
					<rect x="0" y="0" width="12" height="2.500" fill="#7c6b99" />
					<rect x="0" y="3.300" width="15" height="2.500" fill="#7ba0c9" />
					<rect x="0" y="6.600" width="6" height="2.500" fill="#f0a878" />
					<rect x="0" y="10" width="8" height="2.500" fill="#f4737f" />
				</Ico>
				Show Me
			</ShowMeTab>
			<ShowMePanel>
				<ThumbGrid>
					{thumbs.map((t, i) => (
						<Thumb key={i} $on={i === 6} $faded={fadedThumbs.includes(i)}>
							{t}
						</Thumb>
					))}
				</ThumbGrid>
				<HintText>For <b>horizontal bars</b> try</HintText>
				<HintRow $gap={4}>0 or more <Pill $pad={14}>Dimensions</Pill></HintRow>
				<HintRow $gap={2}>1 or more <Pill $measure>Measures</Pill></HintRow>
			</ShowMePanel>

			<SheetTabs>
				<SheetTab $w={163} $pl={11}>
					<Ico w={10} h={12}><ellipse cx="5" cy="2.500" rx="3.500" ry="1.800" stroke="#777" /><path d="M1.500 2.500v7c0 1 1.500 1.800 3.500 1.800s3.500-.8 3.500-1.800v-7" stroke="#777" /></Ico>
					Data Source
				</SheetTab>
				<SheetTab $w={130} $pl={7}>Customer Sales</SheetTab>
				<SheetTab $w={100}>Profit Chart</SheetTab>
				<SheetTab $w={152} $active>Sales Bubble Chart</SheetTab>
				<SheetTab $w={178}>Cuisine Sales &amp; Profits</SheetTab>
				<SheetTab $w={124}>Sales Pie Chart</SheetTab>
				<SheetTab $w={229} $pl={8}>
					<Ico w={12} h={12}><rect x=".5" y=".5" width="10" height="10" stroke="#666" /><path d="M5.500 .5v10M.5 5.500h10" stroke="#666" /></Ico>
					Customer Sales Dashboard
				</SheetTab>
				{[
					<path key="a" d="M4 7v-2M6 7V3M8 7V4" stroke="#666" />,
					<path key="b" d="M5.500 .5v10M.5 5.500h10" stroke="#666" />,
					<path key="c" d="M4 1v9M8 1v9" stroke="#666" />,
				].map((inner, i) => (
					<SheetTab key={i} $w={32} $pl={8}>
						<Ico w={17} h={17}>
							<rect x=".5" y=".5" width="10" height="10" stroke="#666" />
							{inner}
							<path d="M12 7.500v8M8 11.500h8" stroke="#555" strokeWidth="2" />
						</Ico>
					</SheetTab>
				))}
			</SheetTabs>
			<StatusBar>
				<StatusText $ml={3}>40 marks</StatusText>
				<StatusText $ml={24}>1 row by 1 column</StatusText>
				<StatusText $ml={18}>SUM(Sales): 194,021.1</StatusText>
				<StatusRight>
					<StatusCell $w={157} $pad={5} $gap={9}>
						<Ico w={12} h={15}><circle cx="6" cy="3.500" r="2.500" stroke="#555" /><path d="M1 14.500v-3a3 3 0 0 1 3-3h4a3 3 0 0 1 3 3v3z" stroke="#555" /></Ico>
						Fred Toh
						<Caret $ml={50} $color="#222" />
					</StatusCell>
					<StatusCell $w={32} />
					<StatusCell $w={32} />
					<StatusCell $w={57} />
					<StatusCell $w={71} $pad={9} $justify="space-between">
						{["M2 1v8M8 1L3 5l5 4z", "M7 1L2 5l5 4z", "M2 1l5 4l-5 4z", "M0 1l5 4l-5 4zM7 1v8"].map((d) => (
							<Ico key={d} w={9} h={10}><path d={d} fill="#c4c4c4" stroke="#c4c4c4" strokeWidth=".5" /></Ico>
						))}
					</StatusCell>
					<StatusCell $w={70} $pad={8} $justify="space-between">
						<Ico w={12} h={13}>
							<path d="M0 2h12M0 6h12M0 10h12" stroke="#bbb" strokeWidth="3" strokeDasharray="3 1.500" />
						</Ico>
						<Ico w={12} h={13}>
							<rect x="0" y="0" width="12" height="9" fill="#a9a9a9" />
							<path d="M0 11.500h12" stroke="#a9a9a9" strokeWidth="2" strokeDasharray="3 1.500" />
						</Ico>
						<Ico w={12} h={13}><rect x="0" y="0" width="12" height="13" fill="#666" /></Ico>
					</StatusCell>
				</StatusRight>
			</StatusBar>
		</Windowed>
	);
}
